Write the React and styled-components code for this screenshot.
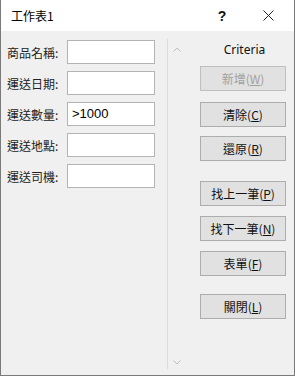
import React from 'react';
import styled, { createGlobalStyle } from 'styled-components';

const GlobalStyle = createGlobalStyle`
  html, body {
    margin: 0;
    padding: 0;
    background: #ffffff;
  }
  body {
    font-family: "Noto Sans", "Noto Sans CJK TC", sans-serif;
  }
`;

const Window = styled.div`
  width: 295px;
  height: 376px;
  box-sizing: border-box;
  border: 1px solid #7a7a7a;
  border-top: none;
  display: flex;
  flex-direction: column;
  background: #f0f0f0;
`;

const TitleBar = styled.div`
  height: 31px;
  background: #ffffff;
  display: flex;
  align-items: center;
  padding-left: 10px;
  font-family: "Noto Sans CJK TC", sans-serif;
  font-size: 12px;
  color: #000;
`;

const TitleText = styled.div`
  flex: 1;
`;

const TitleButton = styled.div`
  width: ${(p) => p.$w}px;
  height: 31px;
  display: flex;
  align-items: center;
  justify-content: center;
  font-family: "Liberation Sans", sans-serif;
  font-size: 14px;
  font-weight: bold;
  color: #111;
`;

const Body = styled.div`
  flex: 1;
  display: flex;
`;

const Fields = styled.div`
  width: 166px;
  padding: 9px 0 0 6px;
  box-sizing: border-box;
  display: flex;
  flex-direction: column;
  gap: 7px;
`;

const FieldRow = styled.div`
  display: flex;
  align-items: center;
  height: 24px;
`;

const Label = styled.div`
  width: 60px;
  font-family: "Noto Sans CJK TC", sans-serif;
  font-size: 12px;
  color: #222;
`;

const Input = styled.div`
  width: 88px;
  height: 24px;
  box-sizing: border-box;
  border: 1px solid #b4b4b4;
  background: #fff;
  font-family: "Liberation Sans", sans-serif;
  font-size: 13px;
  line-height: 22px;
  padding-left: 4px;
  color: #000;
`;

const ScrollBar = styled.div`
  width: 17px;
  margin: 8px 0 6px;
  border-left: 1px solid #dcdcdc;
  display: flex;
  flex-direction: column;
  justify-content: space-between;
  align-items: center;
  padding: 8px 0 4px;
`;

const Buttons = styled.div`
  display: flex;
  flex-direction: column;
  margin-left: 15px;
  padding-top: 11px;
  width: 86px;
`;

const Caption = styled.div`
  text-align: center;
  font-size: 12px;
  line-height: 16px;
  color: #111;
  margin-bottom: 8px;
  padding-left: 3px;
`;

const Button = styled.div`
  height: 25px;
  box-sizing: border-box;
  margin-top: ${(p) => p.$space}px;
  border: 1px solid #adadad;
  background: #e1e1e1;
  display: flex;
  align-items: center;
  justify-content: center;
  font-family: "Noto Sans CJK TC", sans-serif;
  font-size: 12px;
  color: ${(p) => (p.$disabled ? '#a0a0a0' : '#111')};
  border-color: ${(p) => (p.$disabled ? '#bfbfbf' : '#adadad')};
  u {
    text-decoration-thickness: 1px;
    text-underline-offset: 1px;
  }
`;

const Chevron = ({ up }) => (
  <svg width="8" height="5" viewBox="0 0 8 5">
    <path
      d={up ? 'M0.5 4.5 L4 1 L7.5 4.5' : 'M0.5 0.5 L4 4 L7.5 0.5'}
      fill="none"
      stroke="#bdbdbd"
      strokeWidth="1"
    />
  </svg>
);

const fields = [
  ['商品名稱:', ''],
  ['運送日期:', ''],
  ['運送數量:', '>1000'],
  ['運送地點:', ''],
  ['運送司機:', ''],
];

const buttons = [
  { text: '新增', key: 'W', space: 0, disabled: true },
  { text: '清除', key: 'C', space: 11 },
  { text: '還原', key: 'R', space: 9 },
  { text: '找上一筆', key: 'P', space: 20 },
  { text: '找下一筆', key: 'N', space: 10 },
  { text: '表單', key: 'F', space: 10 },
  { text: '關閉', key: 'L', space: 18 },
];

export default function App() {
  return (
    <>
      <GlobalStyle />
      <Window>
        <TitleBar>
          <TitleText>工作表1</TitleText>
          <TitleButton $w={40}>?</TitleButton>
          <TitleButton $w={52}>
            <svg width="11" height="11" viewBox="0 0 11 11">
              <path d="M0.5 0.5 L10.5 10.5 M10.5 0.5 L0.5 10.5" stroke="#222" strokeWidth="1" />
            </svg>
          </TitleButton>
        </TitleBar>
        <Body>
          <Fields>
            {fields.map(([label, value]) => (
              <FieldRow key={label}>
                <Label>{label}</Label>
                <Input>{value}</Input>
              </FieldRow>
            ))}
          </Fields>
          <ScrollBar>
            <Chevron up />
            <Chevron />
          </ScrollBar>
          <Buttons>
            <Caption>Criteria</Caption>
            {buttons.map((b) => (
              <Button key={b.key} $space={b.space} $disabled={b.disabled}>
                {b.text}(<u>{b.key}</u>)
              </Button>
            ))}
          </Buttons>
        </Body>
      </Window>
    </>
  );
}
